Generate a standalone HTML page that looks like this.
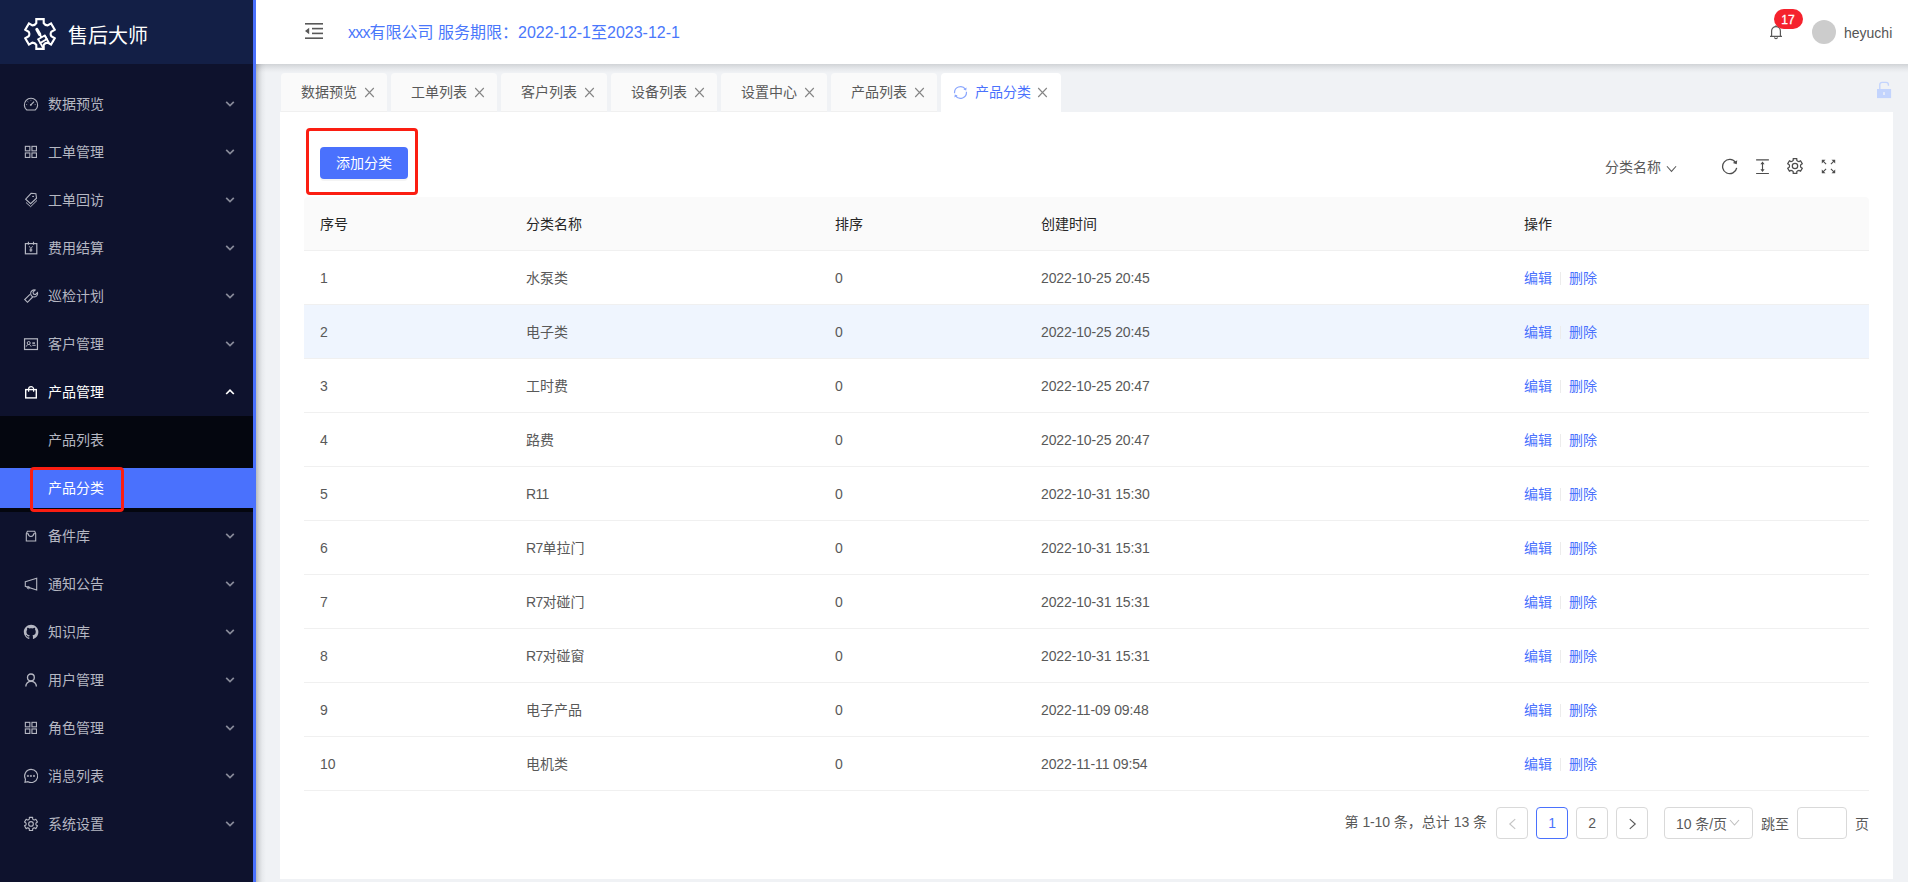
<!DOCTYPE html>
<html lang="zh-CN">
<head>
<meta charset="utf-8">
<title>售后大师</title>
<style>
*{box-sizing:border-box;margin:0;padding:0}
html,body{width:1908px;height:882px;overflow:hidden}
body{position:relative;background:#f0f2f5;font-family:"Liberation Sans","Noto Sans CJK SC",sans-serif;font-size:14px;color:#595959}
.abs{position:absolute}
svg{display:block}
/* sidebar */
#side{position:absolute;left:0;top:0;width:256px;height:882px;background:#0e122d;border-right:3px solid #4a71fd;z-index:5}
#logo{position:absolute;left:0;top:0;width:253px;height:64px;background:#131f46}
#logo .t{position:absolute;left:68px;top:21px;font-size:20px;line-height:30px;color:#fff;white-space:nowrap}
.mi{position:absolute;left:0;width:253px;height:40px;line-height:40px;color:#b5b7c2;white-space:nowrap}
.mi .tx{position:absolute;left:48px;top:0;font-size:14px}
.mi .ic{position:absolute;left:21px;top:10px;width:20px;height:20px}
.mi .ar{position:absolute;left:225px;top:16px;width:10px;height:8px;opacity:.72}
.mi.on .ar{opacity:1}
.mi.on{color:#fff}
#sub{position:absolute;left:0;top:416px;width:253px;height:96px;background:#04060f}
.mi.sel{background:#4a71fd;color:#fff}
.redbox{position:absolute;border:3px solid #fb1e12;border-radius:4px;z-index:9}
/* header */
#head{position:absolute;left:256px;top:0;width:1652px;height:64px;background:#fff;z-index:3}
#hsh{position:absolute;left:256px;top:64px;width:1652px;height:9px;background:linear-gradient(to bottom,rgba(29,35,41,.15),rgba(29,35,41,.09) 30%,rgba(29,35,41,.035) 62%,rgba(29,35,41,0));z-index:1}
#ssh{position:absolute;left:256px;top:64px;width:10px;height:818px;background:linear-gradient(to right,rgba(29,35,41,.27),rgba(29,35,41,.13) 30%,rgba(29,35,41,.04) 62%,rgba(29,35,41,0));z-index:4}
#co{position:absolute;left:92px;top:21px;font-size:16px;line-height:24px;color:#4a77fb;white-space:nowrap}
#badge{position:absolute;left:1517.5px;top:9px;width:29px;height:20px;border-radius:10px;background:#f5222d;color:#fff;font-size:12px;line-height:22px;text-align:center;-webkit-text-stroke:.3px #fff}
#ava{position:absolute;left:1556px;top:20px;width:24px;height:24px;border-radius:50%;background:#ccc}
#usr{position:absolute;left:1588px;top:22px;font-size:14px;line-height:22px;color:#555;white-space:nowrap}
/* tabs */
.tab{position:absolute;top:73px;height:39px;width:106px;background:#fafafa;border-bottom:1px solid #f0f0f0;border-radius:4px 4px 0 0;line-height:39px;font-size:14px;color:#595959;white-space:nowrap}
.tab .tx{position:absolute;left:20px;top:0}
.tab .x{position:absolute;left:83px;top:14.4px;width:11px;height:11px}
.tab.act{background:#fff;border-color:#fff;width:120px;color:#4a71fd}
/* card */
#card{position:absolute;left:280px;top:112px;width:1613px;height:767px;background:#fff}
#btn{position:absolute;left:40px;top:35px;width:88px;height:32px;border-radius:4px;background:#4a71fd;color:#fff;font-size:14px;line-height:32px;text-align:center;box-shadow:0 2px 0 rgba(0,0,0,.045)}
#thead{position:absolute;left:24px;top:85px;width:1565px;height:54px;background:#fafafa;border-bottom:1px solid #f0f0f0;border-radius:4px 4px 0 0}
.th{position:absolute;top:0;line-height:55px;color:#262626;font-size:14px;white-space:nowrap}
.tr{position:absolute;left:24px;width:1565px;height:54px;border-bottom:1px solid #f0f0f0}
.tr.hov{background:#eff5fe}
.td{position:absolute;top:0;line-height:55px;font-size:14px;color:#595959;white-space:nowrap}
.n{font-size:14px;letter-spacing:-.12px}
.n2{letter-spacing:-.7px}
.lk{color:#4a71fd}
.dv{position:absolute;top:21px;left:1256px;width:1px;height:13px;background:#ececec}
/* pagination */
.pg{position:absolute;top:695px;height:32px;line-height:30px;font-size:14px;color:#595959;white-space:nowrap}
.pb{position:absolute;top:695px;width:32px;height:32px;border:1px solid #d9d9d9;border-radius:4px;background:#fff;text-align:center;line-height:30px;font-size:14px;color:#595959}
</style>
</head>
<body>
<div id="side">
 <div id="logo"><div class="t">售后大师</div></div>
<svg class="abs" style="left:24px;top:18px" width="32" height="32" viewBox="0 0 32 32" fill="none" stroke="#fff" stroke-width="2.1" stroke-linejoin="miter"><path d="M12.30 5.10L12.30 1.10L19.70 1.10L19.70 5.10Q21.00 7.34 23.59 7.35L27.05 5.35L30.75 11.75L27.29 13.75Q26.00 16.00 27.29 18.25L30.75 20.25L27.05 26.65L23.59 24.65Q21.00 24.66 19.70 26.90L19.70 30.90L12.30 30.90L12.30 26.90Q11.00 24.66 8.41 24.65L4.95 26.65L1.25 20.25L4.71 18.25Q6.00 16.00 4.71 13.75L1.25 11.75L4.95 5.35L8.41 7.35Q11.00 7.34 12.30 5.10Z"/><g transform="translate(18.500,21.200) rotate(-30)"><path d="M0 -11.2V-5.600" stroke-width="3.200" stroke-linecap="round"/><path d="M0 -5.600V-2.200" stroke-width="1.900"/><rect x="-3.800" y="-2.100" width="7.600" height="4.200" stroke-width="1.800"/><path d="M-3.800 2.100V7.600M3.800 -2.100V6.600" stroke-width="1.800"/></g></svg>
<div class="mi" style="top:84px"><svg class="ic" width="20" height="20" viewBox="0 0 20 20" fill="none" stroke="currentColor" stroke-width="1.1"><path d="M5.800 16.050A6.650 6.650 0 1 1 14.200 16.050z"/><path d="M9.900 10.800L13 7.600" stroke-width="1.200"/><circle cx="9.800" cy="10.900" r="0.900" fill="currentColor" stroke="none"/><path d="M5.100 10.600h1M6.500 7.400l.8.600M9.900 5.800v.9M13.700 10.600h1" stroke-width="0.900" opacity=".8"/></svg><span class="tx">数据预览</span><svg class="ar" width="10" height="8" viewBox="0 0 10 8" fill="none" stroke="currentColor" stroke-width="1.700"><path d="M1.200 1.800L5 5.600 8.800 1.800"/></svg></div>
<div class="mi" style="top:132px"><svg class="ic" width="20" height="20" viewBox="0 0 20 20" fill="none" stroke="currentColor" stroke-width="1.1"><rect x="4.350" y="4.350" width="4.500" height="4.500"/><rect x="10.950" y="4.350" width="4.500" height="4.500"/><rect x="4.350" y="10.950" width="4.500" height="4.500"/><rect x="10.950" y="10.950" width="4.500" height="4.500"/></svg><span class="tx">工单管理</span><svg class="ar" width="10" height="8" viewBox="0 0 10 8" fill="none" stroke="currentColor" stroke-width="1.700"><path d="M1.200 1.800L5 5.600 8.800 1.800"/></svg></div>
<div class="mi" style="top:180px"><svg class="ic" width="20" height="20" viewBox="0 0 20 20" fill="none" stroke="currentColor" stroke-width="1.1"><path d="M10.100 3.300L14.900 3.650 15.500 8.200 9.600 13.700 4.650 9.100z"/><path d="M5 12.500l4.600 4.200 6.400-6.250" stroke-width="1"/><path d="M11.200 6.400h1.800" stroke-width="1"/></svg><span class="tx">工单回访</span><svg class="ar" width="10" height="8" viewBox="0 0 10 8" fill="none" stroke="currentColor" stroke-width="1.700"><path d="M1.200 1.800L5 5.600 8.800 1.800"/></svg></div>
<div class="mi" style="top:228px"><svg class="ic" width="20" height="20" viewBox="0 0 20 20" fill="none" stroke="currentColor" stroke-width="1.1"><rect x="4.400" y="5.600" width="11.400" height="10.200" stroke-width="1.200"/><path d="M7.400 3.650v3.200M12.500 3.650v3.200"/><path d="M8.200 8.200l1.700 2.400 1.700-2.400M9.900 10.600v3.300M8.500 11.300h2.800M8.500 12.700h2.800" stroke-width="0.900"/></svg><span class="tx">费用结算</span><svg class="ar" width="10" height="8" viewBox="0 0 10 8" fill="none" stroke="currentColor" stroke-width="1.700"><path d="M1.200 1.800L5 5.600 8.800 1.800"/></svg></div>
<div class="mi" style="top:276px"><svg class="ic" width="20" height="20" viewBox="0 0 20 20" fill="none" stroke="currentColor" stroke-width="1.1"><path d="M9 8.300L3.700 13.500 6.500 16.300 11.700 11"/><path d="M14.200 4.100a3.500 3.500 0 1 0 2.300 2.400l-2.100 2.100-1.900-.5-.500-1.900z"/></svg><span class="tx">巡检计划</span><svg class="ar" width="10" height="8" viewBox="0 0 10 8" fill="none" stroke="currentColor" stroke-width="1.700"><path d="M1.200 1.800L5 5.600 8.800 1.800"/></svg></div>
<div class="mi" style="top:324px"><svg class="ic" width="20" height="20" viewBox="0 0 20 20" fill="none" stroke="currentColor" stroke-width="1.1"><rect x="3.550" y="4.800" width="12.900" height="10.700" stroke-width="1.200"/><circle cx="7.700" cy="9" r="1.500" stroke-width="1"/><path d="M5.300 12.600c.4-1.400 1.200-2.100 2.400-2.100s2 .7 2.400 2.100" stroke-width="1"/><path d="M11.300 9.100h2.700" stroke-width="1.500"/><path d="M11.300 11.300h3.400" stroke-width="1"/></svg><span class="tx">客户管理</span><svg class="ar" width="10" height="8" viewBox="0 0 10 8" fill="none" stroke="currentColor" stroke-width="1.700"><path d="M1.200 1.800L5 5.600 8.800 1.800"/></svg></div>
<div class="mi on" style="top:372px"><svg class="ic" width="20" height="20" viewBox="0 0 20 20" fill="none" stroke="currentColor" stroke-width="1.1"><rect x="4.700" y="7.600" width="10.600" height="8.300" stroke-width="1.400"/><path d="M7.600 9.700V7.100a2.500 2.500 0 0 1 5 0v2.600" stroke-width="1.200"/></svg><span class="tx">产品管理</span><svg class="ar" width="10" height="8" viewBox="0 0 10 8" fill="none" stroke="currentColor" stroke-width="1.700"><path d="M1.200 6L5 2.200 8.800 6"/></svg></div>
<div class="mi" style="top:516px"><svg class="ic" width="20" height="20" viewBox="0 0 20 20" fill="none" stroke="currentColor" stroke-width="1.1"><path d="M5.300 7.700L6.400 5.200h7.300l1 2.500v7.300H5.300z"/><path d="M5.300 7.700h2M12.700 7.700h2" stroke-width="1"/><path d="M7.200 7.600a2.750 2.900 0 0 0 5.500 0" stroke-width="1.100"/></svg><span class="tx">备件库</span><svg class="ar" width="10" height="8" viewBox="0 0 10 8" fill="none" stroke="currentColor" stroke-width="1.700"><path d="M1.200 1.800L5 5.600 8.800 1.800"/></svg></div>
<div class="mi" style="top:564px"><svg class="ic" width="20" height="20" viewBox="0 0 20 20" fill="none" stroke="currentColor" stroke-width="1.1"><path d="M4.300 7.700L15.700 4.200v11.700L4.300 12.300z"/><circle cx="7.400" cy="13.600" r="1.150" stroke-width="1"/></svg><span class="tx">通知公告</span><svg class="ar" width="10" height="8" viewBox="0 0 10 8" fill="none" stroke="currentColor" stroke-width="1.700"><path d="M1.200 1.800L5 5.600 8.800 1.800"/></svg></div>
<div class="mi" style="top:612px"><svg class="ic" width="20" height="20" viewBox="0 0 20 20" fill="currentColor"><path transform="translate(2.800,2.800) scale(0.9125)" d="M8 0C3.580 0 0 3.580 0 8c0 3.540 2.290 6.530 5.470 7.590.4.070.55-.17.550-.38 0-.19-.01-.82-.01-1.490-2.010.37-2.530-.49-2.690-.94-.09-.23-.48-.94-.82-1.130-.28-.15-.68-.52-.01-.53.630-.01 1.080.58 1.230.82.720 1.210 1.870.87 2.330.66.070-.52.280-.87.510-1.070-1.780-.2-3.640-.89-3.640-3.950 0-.87.310-1.590.82-2.150-.08-.2-.36-1.020.08-2.120 0 0 .67-.21 2.200.82.640-.18 1.320-.27 2-.27s1.360.09 2 .27c1.530-1.040 2.200-.82 2.200-.82.440 1.100.16 1.920.08 2.120.51.560.82 1.270.82 2.150 0 3.070-1.870 3.750-3.650 3.950.29.250.54.730.54 1.480 0 1.070-.01 1.930-.01 2.200 0 .21.150.46.550.38A8.010 8.010 0 0 0 16 8c0-4.420-3.580-8-8-8z"/></svg><span class="tx">知识库</span><svg class="ar" width="10" height="8" viewBox="0 0 10 8" fill="none" stroke="currentColor" stroke-width="1.700"><path d="M1.200 1.800L5 5.600 8.800 1.800"/></svg></div>
<div class="mi" style="top:660px"><svg class="ic" width="20" height="20" viewBox="0 0 20 20" fill="none" stroke="currentColor" stroke-width="1.35"><circle cx="9.900" cy="7.400" r="3.400"/><path d="M4.800 16.500a5.300 5.300 0 0 1 10.600 0"/></svg><span class="tx">用户管理</span><svg class="ar" width="10" height="8" viewBox="0 0 10 8" fill="none" stroke="currentColor" stroke-width="1.700"><path d="M1.200 1.800L5 5.600 8.800 1.800"/></svg></div>
<div class="mi" style="top:708px"><svg class="ic" width="20" height="20" viewBox="0 0 20 20" fill="none" stroke="currentColor" stroke-width="1.1"><rect x="4.350" y="4.350" width="4.500" height="4.500"/><rect x="10.950" y="4.350" width="4.500" height="4.500"/><rect x="4.350" y="10.950" width="4.500" height="4.500"/><rect x="10.950" y="10.950" width="4.500" height="4.500"/></svg><span class="tx">角色管理</span><svg class="ar" width="10" height="8" viewBox="0 0 10 8" fill="none" stroke="currentColor" stroke-width="1.700"><path d="M1.200 1.800L5 5.600 8.800 1.800"/></svg></div>
<div class="mi" style="top:756px"><svg class="ic" width="20" height="20" viewBox="0 0 20 20" fill="none" stroke="currentColor" stroke-width="1.1"><path d="M10.100 3.400a6.550 6.550 0 1 1-3.100 12.300l-3 .500.500-3A6.550 6.550 0 0 1 10.100 3.400z" stroke-width="1.150"/><rect x="5.900" y="8.950" width="2" height="2" fill="currentColor" stroke="none" opacity=".75"/><rect x="8.900" y="8.950" width="2" height="2" fill="currentColor" stroke="none" opacity=".75"/><rect x="12" y="8.950" width="2" height="2" fill="currentColor" stroke="none" opacity=".75"/></svg><span class="tx">消息列表</span><svg class="ar" width="10" height="8" viewBox="0 0 10 8" fill="none" stroke="currentColor" stroke-width="1.700"><path d="M1.200 1.800L5 5.600 8.800 1.800"/></svg></div>
<div class="mi" style="top:804px"><svg class="ic" width="20" height="20" viewBox="0 0 20 20" fill="none" stroke="currentColor" stroke-width="1.1"><path d="M8.35 5.05L8.35 3.40L11.65 3.40L11.65 5.05Q12.25 6.05 13.42 6.07L14.85 5.25L16.50 8.10L15.07 8.93Q14.50 9.95 15.07 10.97L16.50 11.80L14.85 14.65L13.42 13.83Q12.25 13.85 11.65 14.85L11.65 16.50L8.35 16.50L8.35 14.85Q7.75 13.85 6.58 13.83L5.15 14.65L3.50 11.80L4.93 10.97Q5.50 9.95 4.93 8.93L3.50 8.10L5.15 5.25L6.58 6.07Q7.75 6.05 8.35 5.05Z" stroke-linejoin="round"/><circle cx="10" cy="9.950" r="2.350"/></svg><span class="tx">系统设置</span><svg class="ar" width="10" height="8" viewBox="0 0 10 8" fill="none" stroke="currentColor" stroke-width="1.700"><path d="M1.200 1.800L5 5.600 8.800 1.800"/></svg></div>
<div id="sub"></div>
<div class="mi" style="top:420px"><span class="tx">产品列表</span></div>
<div class="mi sel" style="top:468px"><span class="tx">产品分类</span></div>
<div class="redbox" style="left:30px;top:467px;width:94px;height:45px"></div>
</div>
<div id="hsh"></div><div id="ssh"></div>
<div id="head">
<svg class="abs" style="left:49px;top:23px" width="18" height="16" viewBox="0 0 18 16" fill="#595959"><rect x="0" y="0" width="18" height="1.6"/><rect x="7" y="4.800" width="11" height="1.6"/><rect x="7" y="9.600" width="11" height="1.6"/><rect x="0" y="14.400" width="18" height="1.6"/><path d="M0 8l4.200-3.200v6.400z"/></svg><svg class="abs" style="left:1513px;top:24px" width="14" height="16" viewBox="0 0 14 16" fill="none" stroke="#595959" stroke-width="1.2"><path d="M1 12.400h12M2.600 12.400V7a4.400 4.400 0 0 1 8.800 0v5.400"/><path d="M5.600 13.200a1.400 1.400 0 0 0 2.800 0" stroke-width="1.1"/><path d="M7 1.200v1.400"/></svg>
 <div id="co"><span style="letter-spacing:-.8px">xxx</span>有限公司 服务期限：2022-12-1至2023-12-1</div>
 <div id="badge">17</div>
 <div id="ava"></div>
 <div id="usr">heyuchi</div>
</div>
<div class="tab" style="left:281px"><span class="tx">数据预览</span><svg class="x" width="11" height="11" viewBox="0 0 11 11" fill="none" stroke="#858585" stroke-width="1.100"><path d="M1.200 1l8.600 9M9.800 1L1.200 10"/></svg></div>
<div class="tab" style="left:391px"><span class="tx">工单列表</span><svg class="x" width="11" height="11" viewBox="0 0 11 11" fill="none" stroke="#858585" stroke-width="1.100"><path d="M1.200 1l8.600 9M9.800 1L1.200 10"/></svg></div>
<div class="tab" style="left:501px"><span class="tx">客户列表</span><svg class="x" width="11" height="11" viewBox="0 0 11 11" fill="none" stroke="#858585" stroke-width="1.100"><path d="M1.200 1l8.600 9M9.800 1L1.200 10"/></svg></div>
<div class="tab" style="left:611px"><span class="tx">设备列表</span><svg class="x" width="11" height="11" viewBox="0 0 11 11" fill="none" stroke="#858585" stroke-width="1.100"><path d="M1.200 1l8.600 9M9.800 1L1.200 10"/></svg></div>
<div class="tab" style="left:721px"><span class="tx">设置中心</span><svg class="x" width="11" height="11" viewBox="0 0 11 11" fill="none" stroke="#858585" stroke-width="1.100"><path d="M1.200 1l8.600 9M9.800 1L1.200 10"/></svg></div>
<div class="tab" style="left:831px"><span class="tx">产品列表</span><svg class="x" width="11" height="11" viewBox="0 0 11 11" fill="none" stroke="#858585" stroke-width="1.100"><path d="M1.200 1l8.600 9M9.800 1L1.200 10"/></svg></div>
<div class="tab act" style="left:941px"><svg class="abs" style="left:12px;top:12px" width="15" height="15" viewBox="0 0 15 15" fill="none" stroke="#8aa6fd" stroke-width="1.200"><path d="M1.600 8.300A6 6 0 0 1 12.400 4.100M13.400 6.700A6 6 0 0 1 2.600 10.900"/><path d="M13.600 2.600L13.200 5.600 10.400 4.600zM1.400 12.400l.4-3 2.800 1z" fill="#8aa6fd" stroke="none"/></svg><span class="tx" style="left:34px">产品分类</span><svg class="x" style="left:96px" width="11" height="11" viewBox="0 0 11 11" fill="none" stroke="#858585" stroke-width="1.100"><path d="M1.200 1l8.600 9M9.800 1L1.200 10"/></svg></div><svg class="abs" style="left:1876px;top:81px;z-index:2" width="16" height="18" viewBox="0 0 16 18" fill="#c3d4fd"><path d="M1 8h14.100v9.100H1z"/><path d="M3.800 8V3.600a2.200 2.200 0 0 1 2.200-2.200h4.200a2.200 2.200 0 0 1 2.200 2.200v1.200" fill="none" stroke="#c3d4fd" stroke-width="1.400"/><rect x="7" y="11.100" width="2" height="2.900" fill="#e4eafa"/></svg>
<div id="card">
 <div id="btn">添加分类</div>
<div id="thead"><span class="th" style="left:16px">序号</span><span class="th" style="left:222px">分类名称</span><span class="th" style="left:531px">排序</span><span class="th" style="left:737px">创建时间</span><span class="th" style="left:1220px">操作</span></div>
<div class="tr" style="top:139px"><span class="td n" style="left:16px">1</span><span class="td" style="left:222px">水泵类</span><span class="td n" style="left:531px">0</span><span class="td n" style="left:737px">2022-10-25 20:45</span><span class="td lk" style="left:1220px">编辑</span><i class="dv"></i><span class="td lk" style="left:1265px">删除</span></div>
<div class="tr hov" style="top:193px"><span class="td n" style="left:16px">2</span><span class="td" style="left:222px">电子类</span><span class="td n" style="left:531px">0</span><span class="td n" style="left:737px">2022-10-25 20:45</span><span class="td lk" style="left:1220px">编辑</span><i class="dv"></i><span class="td lk" style="left:1265px">删除</span></div>
<div class="tr" style="top:247px"><span class="td n" style="left:16px">3</span><span class="td" style="left:222px">工时费</span><span class="td n" style="left:531px">0</span><span class="td n" style="left:737px">2022-10-25 20:47</span><span class="td lk" style="left:1220px">编辑</span><i class="dv"></i><span class="td lk" style="left:1265px">删除</span></div>
<div class="tr" style="top:301px"><span class="td n" style="left:16px">4</span><span class="td" style="left:222px">路费</span><span class="td n" style="left:531px">0</span><span class="td n" style="left:737px">2022-10-25 20:47</span><span class="td lk" style="left:1220px">编辑</span><i class="dv"></i><span class="td lk" style="left:1265px">删除</span></div>
<div class="tr" style="top:355px"><span class="td n" style="left:16px">5</span><span class="td" style="left:222px"><span class="n n2">R11</span></span><span class="td n" style="left:531px">0</span><span class="td n" style="left:737px">2022-10-31 15:30</span><span class="td lk" style="left:1220px">编辑</span><i class="dv"></i><span class="td lk" style="left:1265px">删除</span></div>
<div class="tr" style="top:409px"><span class="td n" style="left:16px">6</span><span class="td" style="left:222px"><span class="n n2">R7</span>单拉门</span><span class="td n" style="left:531px">0</span><span class="td n" style="left:737px">2022-10-31 15:31</span><span class="td lk" style="left:1220px">编辑</span><i class="dv"></i><span class="td lk" style="left:1265px">删除</span></div>
<div class="tr" style="top:463px"><span class="td n" style="left:16px">7</span><span class="td" style="left:222px"><span class="n n2">R7</span>对碰门</span><span class="td n" style="left:531px">0</span><span class="td n" style="left:737px">2022-10-31 15:31</span><span class="td lk" style="left:1220px">编辑</span><i class="dv"></i><span class="td lk" style="left:1265px">删除</span></div>
<div class="tr" style="top:517px"><span class="td n" style="left:16px">8</span><span class="td" style="left:222px"><span class="n n2">R7</span>对碰窗</span><span class="td n" style="left:531px">0</span><span class="td n" style="left:737px">2022-10-31 15:31</span><span class="td lk" style="left:1220px">编辑</span><i class="dv"></i><span class="td lk" style="left:1265px">删除</span></div>
<div class="tr" style="top:571px"><span class="td n" style="left:16px">9</span><span class="td" style="left:222px">电子产品</span><span class="td n" style="left:531px">0</span><span class="td n" style="left:737px">2022-11-09 09:48</span><span class="td lk" style="left:1220px">编辑</span><i class="dv"></i><span class="td lk" style="left:1265px">删除</span></div>
<div class="tr" style="top:625px"><span class="td n" style="left:16px">10</span><span class="td" style="left:222px">电机类</span><span class="td n" style="left:531px">0</span><span class="td n" style="left:737px">2022-11-11 09:54</span><span class="td lk" style="left:1220px">编辑</span><i class="dv"></i><span class="td lk" style="left:1265px">删除</span></div>
<div class="abs" style="left:1325px;top:44px;line-height:22px;font-size:14px;color:#595959;white-space:nowrap">分类名称</div>
<svg class="abs" style="left:1385.500px;top:52.500px" width="11" height="8" viewBox="0 0 12 8" fill="none" stroke="#595959" stroke-width="1.100"><path d="M1 1l5 5.600L11 1"/></svg>
<svg class="abs" style="left:1441px;top:46px" width="17" height="17" viewBox="0 0 17 17" fill="none" stroke="#4d4d4d" stroke-width="1.300"><path d="M14.600 4.600A7.100 7.100 0 1 0 15.700 9.800"/><path d="M16.200 2.200l-.5 4.100-3.900-1.300z" fill="#4d4d4d" stroke="none"/></svg>
<svg class="abs" style="left:1476px;top:46.500px" width="13" height="15.500" viewBox="0 0 14 17" fill="none" stroke="#4d4d4d" stroke-width="1.250"><path d="M0 1h14M0 16h14M7 4.400v8.200"/><path d="M4.700 5.800L7 2.700 9.300 5.800zM4.700 11.200L7 14.300 9.300 11.200z" fill="#4d4d4d" stroke="none"/></svg>
<svg class="abs" style="left:1505.100px;top:44.200px" width="20" height="20" viewBox="0 0 20 20" fill="none" stroke="#4d4d4d" stroke-width="1.250"><path d="M8.20 4.40L8.20 2.55L11.80 2.55L11.80 4.40Q12.60 5.50 13.95 5.64L15.55 4.72L17.35 7.83L15.75 8.76Q15.20 10.00 15.75 11.24L17.35 12.17L15.55 15.28L13.95 14.36Q12.60 14.50 11.80 15.60L11.80 17.45L8.20 17.45L8.20 15.60Q7.40 14.50 6.05 14.36L4.45 15.28L2.65 12.17L4.25 11.24Q4.80 10.00 4.25 8.76L2.65 7.83L4.45 4.72L6.05 5.64Q7.40 5.50 8.20 4.40Z" stroke-linejoin="round"/><circle cx="10" cy="10" r="2.700"/></svg>
<svg class="abs" style="left:1541px;top:47px" width="15" height="15" viewBox="0 0 15 15" fill="none" stroke="#4d4d4d" stroke-width="1.100"><path d="M1.600 1.600l3.500 3.500M13.400 1.600l-3.500 3.500M1.600 13.400l3.500-3.500M13.400 13.400l-3.500-3.500"/><path d="M0.800 0.800h3.700L0.800 4.500zM14.200 0.800v3.700L10.500 0.800zM0.800 14.200v-3.700l3.700 3.700zM14.200 14.200h-3.700l3.700-3.700z" fill="#4d4d4d" stroke="none"/></svg>
<div class="redbox" style="left:26px;top:16px;width:112px;height:67px"></div>
<div class="pg" style="left:1064.5px;top:695px">第 <span class="n">1-10</span> 条，总计 <span class="n">13</span> 条</div>
<div class="pb" style="left:1216px"><svg style="margin:9.500px auto 0" width="9" height="12" viewBox="0 0 8 11" fill="none" stroke="#c4c4c4" stroke-width="1.050"><path d="M6.500 1L1.500 5.500l5 4.500"/></svg></div>
<div class="pb" style="left:1256px;border-color:#4a71fd;color:#4a71fd"><span class="n" style="font-size:14px">1</span></div>
<div class="pb" style="left:1296px"><span class="n" style="font-size:14px">2</span></div>
<div class="pb" style="left:1336px"><svg style="margin:9.500px auto 0" width="9" height="12" viewBox="0 0 8 11" fill="none" stroke="#595959" stroke-width="1.050"><path d="M1.500 1l5 4.500-5 4.500"/></svg></div>
<div class="pb" style="left:1384px;width:89px;text-align:left;padding-left:11px;line-height:32px"><span class="n">10</span> 条/页<svg class="abs" style="left:64px;top:11px" width="11" height="8" viewBox="0 0 11 8" fill="none" stroke="#bfbfbf" stroke-width="1.100"><path d="M1 1l4.500 5L10 1"/></svg></div>
<div class="pg" style="left:1481px;top:697px">跳至</div>
<div class="pb" style="left:1517px;width:50px"></div>
<div class="pg" style="left:1575px;top:697px">页</div>
</div>
</body>
</html>
